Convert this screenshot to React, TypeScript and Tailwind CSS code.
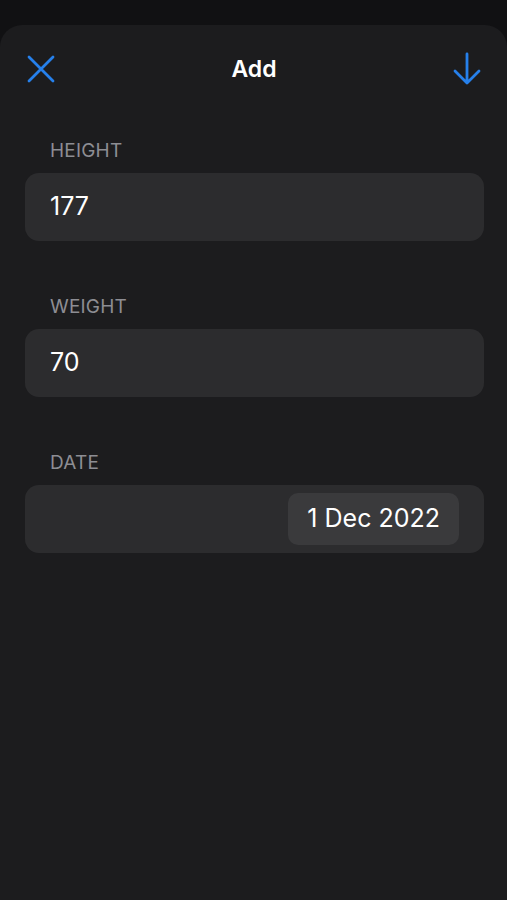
import React from 'react';

const Field = ({ label, children, className = '' }: { label: string; children: React.ReactNode; className?: string }) => (
  <div className={className}>
    <div className="pl-[25px] text-[19px] leading-[22px] text-[#8d8d93] tracking-[0.2px]">{label}</div>
    <div className="mt-[11px] h-[68px] rounded-[14px] bg-[#2c2c2e] flex items-center px-[25px]">{children}</div>
  </div>
);

export default function App() {
  return (
    <div className="w-[507px] h-[900px] bg-[#111113] pt-[25px] overflow-hidden" style={{ fontFamily: 'Inter, "Noto Sans", sans-serif' }}>
      <div className="h-full bg-[#1c1c1e] rounded-t-[22px] pl-[25px] pr-[23px] pt-[24px]">
        <div className="h-[40px] flex items-center justify-between">
          <svg width="30" height="30" viewBox="0 0 30 30" className="ml-[1px]">
            <path d="M3 3 L27 27 M27 3 L3 27" stroke="#2680eb" strokeWidth="2.8" strokeLinecap="round" fill="none" />
          </svg>
          <div className="text-[23px] font-semibold text-white leading-none">Add</div>
          <svg width="30" height="34" viewBox="0 0 30 34" className="mr-[2px]">
            <path d="M15 2 V31 M3 19 L15 31 L27 19" stroke="#2680eb" strokeWidth="2.8" strokeLinecap="round" strokeLinejoin="round" fill="none" />
          </svg>
        </div>
        <Field label="HEIGHT" className="mt-[51px]">
          <span className="text-[25px] text-white">177</span>
        </Field>
        <Field label="WEIGHT" className="mt-[55px]">
          <span className="text-[25px] text-white">70</span>
        </Field>
        <Field label="DATE" className="mt-[55px]">
          <div className="ml-auto h-[52px] rounded-[10px] bg-[#3a3a3c] px-[19px] flex items-center text-[25px] text-white">1 Dec 2022</div>
        </Field>
      </div>
    </div>
  );
}
